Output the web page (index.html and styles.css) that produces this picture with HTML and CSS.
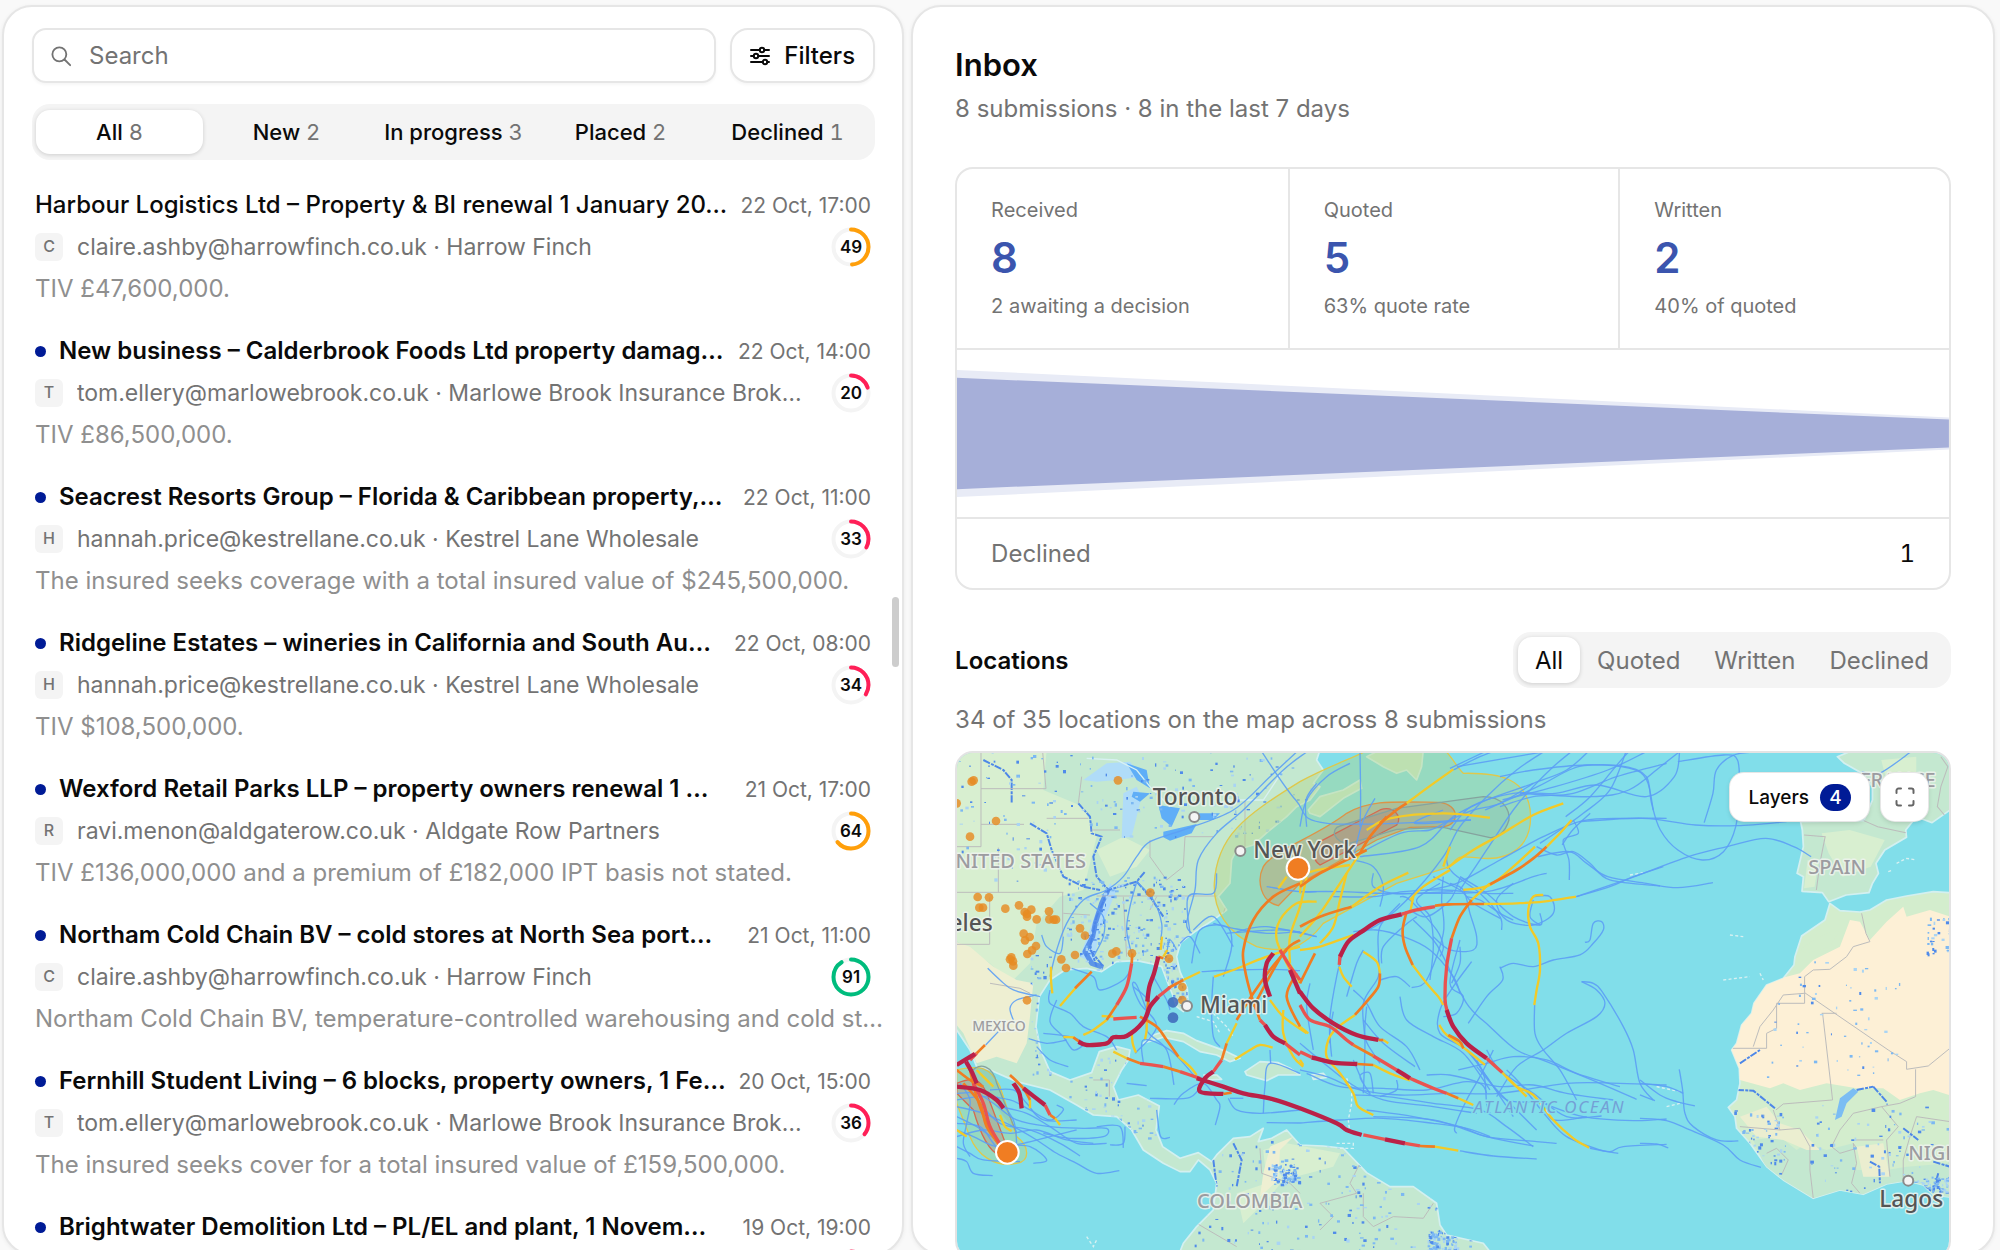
FILE: index.html
```html
<!DOCTYPE html>
<html lang="en">
<head>
<meta charset="utf-8">
<title>Inbox</title>
<link rel="stylesheet" href="styles.css">
</head>
<body>
<div class="app">
  <section class="panel list-panel" aria-label="Submissions">
    <div class="toolbar">
      <label class="search">
        <svg class="search-icon" viewBox="0 0 24 24" aria-hidden="true"><circle cx="10.2" cy="10.2" r="7.6"/><path d="M15.8 15.8 22 22"/></svg>
        <input type="text" placeholder="Search" aria-label="Search">
      </label>
      <button class="filters" type="button">
        <svg class="filter-icon" viewBox="0 0 20 20" aria-hidden="true"><path d="M1 4h8.500M14.500 4H19M1 10h2.500M8.500 10H19M1 16h11.500M17.500 16H19"/><circle cx="12" cy="4" r="2.200"/><circle cx="6" cy="10" r="2.200"/><circle cx="15" cy="16" r="2.200"/></svg>
        Filters
      </button>
    </div>
    <div class="tabs">
      <button class="tab active" type="button">All <span>8</span></button>
      <button class="tab" type="button">New <span>2</span></button>
      <button class="tab" type="button">In progress <span>3</span></button>
      <button class="tab" type="button">Placed <span>2</span></button>
      <button class="tab" type="button">Declined <span>1</span></button>
    </div>
    <div class="items">
      <article class="item read">
        <div class="row"><h3>Harbour Logistics Ltd – Property &amp; BI renewal 1 January 20…</h3><time>22 Oct, 17:00</time></div>
        <div class="row"><span class="avatar">C</span><span class="from">claire.ashby@harrowfinch.co.uk · Harrow Finch</span><span class="score amber"><svg viewBox="0 0 40 40"><circle cx="20" cy="20" r="17.500"/><circle class="arc" cx="20" cy="20" r="17.500" pathLength="100" stroke-dasharray="49 100"/></svg><b>49</b></span></div>
        <p>TIV £47,600,000.</p>
      </article>
      <article class="item">
        <div class="row"><i class="dot"></i><h3>New business – Calderbrook Foods Ltd property damag…</h3><time>22 Oct, 14:00</time></div>
        <div class="row"><span class="avatar">T</span><span class="from">tom.ellery@marlowebrook.co.uk · Marlowe Brook Insurance Brok…</span><span class="score red"><svg viewBox="0 0 40 40"><circle cx="20" cy="20" r="17.500"/><circle class="arc" cx="20" cy="20" r="17.500" pathLength="100" stroke-dasharray="20 100"/></svg><b>20</b></span></div>
        <p>TIV £86,500,000.</p>
      </article>
      <article class="item">
        <div class="row"><i class="dot"></i><h3>Seacrest Resorts Group – Florida &amp; Caribbean property,…</h3><time>22 Oct, 11:00</time></div>
        <div class="row"><span class="avatar">H</span><span class="from">hannah.price@kestrellane.co.uk · Kestrel Lane Wholesale</span><span class="score red"><svg viewBox="0 0 40 40"><circle cx="20" cy="20" r="17.500"/><circle class="arc" cx="20" cy="20" r="17.500" pathLength="100" stroke-dasharray="33 100"/></svg><b>33</b></span></div>
        <p>The insured seeks coverage with a total insured value of $245,500,000.</p>
      </article>
      <article class="item">
        <div class="row"><i class="dot"></i><h3>Ridgeline Estates – wineries in California and South Au…</h3><time>22 Oct, 08:00</time></div>
        <div class="row"><span class="avatar">H</span><span class="from">hannah.price@kestrellane.co.uk · Kestrel Lane Wholesale</span><span class="score red"><svg viewBox="0 0 40 40"><circle cx="20" cy="20" r="17.500"/><circle class="arc" cx="20" cy="20" r="17.500" pathLength="100" stroke-dasharray="34 100"/></svg><b>34</b></span></div>
        <p>TIV $108,500,000.</p>
      </article>
      <article class="item">
        <div class="row"><i class="dot"></i><h3>Wexford Retail Parks LLP – property owners renewal 1 …</h3><time>21 Oct, 17:00</time></div>
        <div class="row"><span class="avatar">R</span><span class="from">ravi.menon@aldgaterow.co.uk · Aldgate Row Partners</span><span class="score amber"><svg viewBox="0 0 40 40"><circle cx="20" cy="20" r="17.500"/><circle class="arc" cx="20" cy="20" r="17.500" pathLength="100" stroke-dasharray="64 100"/></svg><b>64</b></span></div>
        <p>TIV £136,000,000 and a premium of £182,000 IPT basis not stated.</p>
      </article>
      <article class="item">
        <div class="row"><i class="dot"></i><h3>Northam Cold Chain BV – cold stores at North Sea port…</h3><time>21 Oct, 11:00</time></div>
        <div class="row"><span class="avatar">C</span><span class="from">claire.ashby@harrowfinch.co.uk · Harrow Finch</span><span class="score green"><svg viewBox="0 0 40 40"><circle cx="20" cy="20" r="17.500"/><circle class="arc" cx="20" cy="20" r="17.500" pathLength="100" stroke-dasharray="91 100"/></svg><b>91</b></span></div>
        <p>Northam Cold Chain BV, temperature-controlled warehousing and cold st…</p>
      </article>
      <article class="item">
        <div class="row"><i class="dot"></i><h3>Fernhill Student Living – 6 blocks, property owners, 1 Fe…</h3><time>20 Oct, 15:00</time></div>
        <div class="row"><span class="avatar">T</span><span class="from">tom.ellery@marlowebrook.co.uk · Marlowe Brook Insurance Brok…</span><span class="score red"><svg viewBox="0 0 40 40"><circle cx="20" cy="20" r="17.500"/><circle class="arc" cx="20" cy="20" r="17.500" pathLength="100" stroke-dasharray="36 100"/></svg><b>36</b></span></div>
        <p>The insured seeks cover for a total insured value of £159,500,000.</p>
      </article>
      <article class="item">
        <div class="row"><i class="dot"></i><h3>Brightwater Demolition Ltd – PL/EL and plant, 1 Novem…</h3><time>19 Oct, 19:00</time></div>
        <div class="row"><span class="score red"><svg viewBox="0 0 40 40"><circle cx="20" cy="20" r="17.500"/><circle class="arc" cx="20" cy="20" r="17.500" pathLength="100" stroke-dasharray="30 100"/></svg></span></div>
      </article>
    </div>
    <span class="scroll-thumb"></span>
  </section>

  <main class="panel detail-panel">
    <h1>Inbox</h1>
    <p class="sub">8 submissions · 8 in the last 7 days</p>
    <section class="funnel" aria-label="Funnel">
      <div class="stats">
        <div class="stat"><span>Received</span><strong>8</strong><span>2 awaiting a decision</span></div>
        <div class="stat"><span>Quoted</span><strong>5</strong><span>63% quote rate</span></div>
        <div class="stat"><span>Written</span><strong>2</strong><span>40% of quoted</span></div>
      </div>
      <svg class="funnel-chart" viewBox="0 0 994 168" preserveAspectRatio="none" aria-hidden="true">
        <path fill="#e8ebf6" d="M0 20 994 68V100L0 148Z"/>
        <path fill="#a6afd9" d="M0 28 994 70V98L0 140Z"/>
      </svg>
      <div class="declined"><span>Declined</span><b>1</b></div>
    </section>
    <div class="loc-head">
      <h2>Locations</h2>
      <div class="segment">
        <button class="active" type="button">All</button><button type="button">Quoted</button><button type="button">Written</button><button type="button">Declined</button>
      </div>
    </div>
    <p class="loc-sub">34 of 35 locations on the map across 8 submissions</p>
    <div class="map">
      <svg class="map-canvas" viewBox="21 9 2976 1512" role="img" aria-label="Map of locations">
        <defs>
          <path id="americas" d="M0 0H1110L1100 30 1120 60 1090 100 1110 110 1080 150 1040 170 1010 200 960 240 910 285 860 300 845 330 840 400 805 440 830 480 790 510 735 545 692 578 680 620 690 665 712 715 714 760 700 785 680 770 668 735 650 690 635 650 600 640 560 632 500 635 455 665 410 655 345 660 300 690 268 740 258 830 272 900 300 965 360 990 425 968 448 905 500 890 540 900 535 930 515 960 490 1010 505 1050 565 1035 628 1068 618 1140 638 1190 690 1225 745 1208 785 1235 800 1215 850 1165 900 1160 940 1135 925 1175 965 1165 1010 1140 1050 1185 1120 1188 1180 1195 1250 1268 1320 1310 1390 1310 1460 1360 1470 1425 1490 1455 1600 1480 1640 1530H680L700 1480 740 1430 790 1380 800 1300 780 1260 745 1230 720 1265 690 1265 640 1240 580 1200 545 1140 500 1100 430 1095 380 1065 300 1020 200 995 120 960 80 950 60 900 20 840H0Z"/>
          <path id="africa" d="M930 128 880 125 800 138 740 150 690 180 660 186 600 182 570 160 555 210 485 258 465 320 462 345 430 385 380 405 342 460 335 490 305 525 290 580 275 600 298 655 300 700 290 750 265 772 285 800 290 835 330 880 380 950 430 990 520 1045 600 1020 670 1033 740 1002 800 992 850 1005 880 1035 960 1045V120Z"/>
          <clipPath id="clip-americas"><use href="#americas"/></clipPath>
          <clipPath id="clip-africa"><use href="#africa"/></clipPath>
        </defs>
        <rect x="0" y="0" width="3100" height="1600" fill="#81deea"/>
        <use href="#americas" class="land"/>
        <g clip-path="url(#clip-americas)">
          <path fill="#d8efd0" d="M0 0H290L280 120 400 170 440 260 400 420 330 440 260 520 240 640 180 700 120 640 0 560ZM440 300 520 260 600 300 560 350 480 380ZM860 1330 950 1300 940 1200 1010 1180 1170 1210 1150 1250 1000 1290 960 1340 880 1420Z"/>
          <path fill="#eeefd2" d="M0 570 60 590 130 650 200 690 250 700 240 800 230 880 200 940 140 920 80 940 40 850 0 800ZM930 1340 985 1290 990 1200 1030 1160 960 1190 940 1270Z"/>
          <path fill="#b0dcf8" d="M400 90 470 40 540 35 575 80 500 90 440 95ZM520 130 560 110 575 140 545 260 515 265ZM440 480 480 400 500 420 450 540 430 640 390 620Z"/>
          <path fill="#5faef7" d="M530 40 590 60 600 115 560 90ZM550 125 600 130 570 155 545 140ZM625 165 690 175 665 230 635 205ZM640 245 740 222 725 250 660 272 640 262ZM745 190 810 190 790 210 745 210Z"/>
          <path class="river" d="M385 160 420 200 425 250 455 260 430 320 440 380 475 420 560 395 585 365M475 420 440 500 420 590 440 650M100 30 160 60 185 90 185 160M240 220 290 250 305 300 340 380 400 410 450 420M420 600 460 650M560 395 600 440 640 500M790 1230 800 1310M850 1180 875 1230 860 1310"/>
          <path class="delta" d="M476 415 455 460 436 520 428 560 405 605 425 640 460 652"/>
          <path class="border" d="M93 6V290H20M93 116H288L278 6M93 223H222M290 205H415M425 240H510M145 293V427M20 427H340M119 442V583H20M338 427V560M340 490 420 495M395 80 385 160M600 270V320L650 390 700 350 705 260H790M440 438H800M520 440 530 620M620 440 600 480M120 700 210 715 240 730M845 420 820 490M885 150V290M430 990H478V1040M1050 700 1000 700M930 1195 935 1270 1020 1300 1050 1330M1230 1240 1200 1300 1220 1330 1110 1360 1150 1400 1110 1440M1240 1330 1240 1400 1270 1430 1330 1400 1420 1405 1450 1360M740 1420 860 1490"/>
          <path class="coastline" d="M410 25 500 30 560 60 600 110 660 170M830 150H940L1000 60"/>
          <g id="flecks-west"></g>
        </g>
        <g class="land">
          <path d="M580 880 610 855 650 842 700 850 740 872 790 890 830 905 870 925 840 935 800 915 750 905 700 875 640 862ZM885 965 930 935 985 938 1020 955 1050 975 985 975 950 992 890 975ZM762 975 800 975 815 988 770 990ZM1085 975 1120 970 1130 982 1090 988Z"/>
          <path d="M1250 20 1290 0H1420L1415 50 1400 90 1370 60 1340 70 1300 50ZM1075 180 1110 140 1180 120 1230 90 1235 115 1180 145 1110 200 1080 190Z"/>
        </g>
        <path class="islets" d="M1190 985 1205 1020 1205 1060 1195 1110 1200 1150M1160 1180H1210V1195H1170M740 800 790 815 810 850M790 790 830 830 850 860M410 1460 430 1490 440 1470M2340 555 2380 560M2040 375 2080 368M2320 690 2400 680M2430 670 2440 690M2120 1010 2190 1025M2150 1070 2190 1060M2840 340 2870 325 2900 330M2815 365 2830 360"/>

        <g transform="translate(2070 300)">
          <use href="#africa" class="land light"/>
          <g clip-path="url(#clip-africa)">
            <path fill="#fdf0d6" d="M480 370 520 330 600 290 630 210 660 215 690 270 740 215 790 170 800 200 870 180 960 210V745L880 720 840 730 780 750 730 715 650 715 560 700 480 720 430 700 390 715 300 690 250 600 300 500 350 400 440 380Z"/>
            <path fill="#d3edcd" d="M480 300 520 270 560 250 600 240 570 290 500 310Z"/>
            <path fill="#c4e8d0" d="M340 870 420 860 470 900 500 880 560 900 640 880 650 960 740 960 800 950 930 940V1060H500L380 960Z"/>
            <path fill="#ebeed0" d="M300 800 380 770 420 820 480 840 540 900 500 900 430 870 350 860ZM650 890 730 880 750 980 670 980Z"/>
            <path class="border" d="M665 190 678 250 690 275 640 290 620 320 570 358 520 360 494 380V428L745 600 800 635V658L865 648 930 595M494 428V460H410V535L380 550V595H278M548 490 578 750 430 762 408 780M545 490H590M827 658V740L780 760 725 770 640 790 600 840 575 890 600 910 650 895 640 880 650 940 635 1000 660 1030M725 770 775 830 740 870 750 980M400 780 420 840 480 835 510 890 510 960 520 1045M420 840 300 830M380 910 410 895 445 930 425 975M790 990V930L810 860 830 800 930 815M730 870H645M494 430 430 435 400 480 360 530 340 590"/>
            <path class="river" d="M290 720 340 722 405 775M690 935 718 950 720 1000M700 710 740 755M790 835 835 870M880 935 930 950M895 970 880 1025 850 1010M300 640 360 600M650 720 700 710"/>
            <path fill="#7bbdf3" d="M600 745 640 715 655 725 620 760 605 800 585 810Z"/>
            <g id="flecks-east"></g>
          </g>
        </g>
        <g transform="translate(1500 -450) scale(1.052 1)">
          <path class="land" d="M1000 665 1180 662 1205 600 1205 560 1175 520 1125 490 1105 470 1140 455H1440V620L1375 668 1330 650 1300 690 1302 712 1240 750 1215 790 1222 820 1205 850 1195 878 1130 885 1080 905 1062 878 1004 874 1008 830 990 820 1008 740 1005 690Z"/>
          <path fill="#d8efd0" d="M1060 700 1140 690 1240 720 1200 800 1120 830 1080 760ZM1230 480 1330 470 1330 560 1260 600ZM1020 780 1050 790 1040 860 1010 865Z"/>
          <path class="border" d="M1180 662 1220 680 1300 698M1010 705 1070 710 1055 790 1045 870M1400 470 1420 500 1400 560 1390 620 1410 645"/>
        </g>

        <g class="cones">
          <path class="cone yellow" d="M1050 95C1150 40 1230 20 1290 -20H1450C1500 0 1510 40 1540 70 1640 68 1740 80 1742 200 1742 290 1680 330 1600 325 1530 320 1530 310 1500 350L1340 400 1120 520C1060 600 1000 610 920 590 830 550 790 480 793 400 800 260 880 200 1050 95Z"/>
          <path class="cone orange" d="M985 467C930 455 920 390 940 350 970 300 1100 260 1190 190 1260 150 1320 155 1470 157 1530 165 1530 225 1480 230L1380 232 1280 270 1050 400Z"/>
          <path class="cone red" d="M1110 345C1085 330 1090 290 1110 275L1290 180C1330 165 1360 200 1340 225Z"/>
          <path class="cone grey" d="M1170 228 1340 175 1600 140C1660 140 1680 180 1677 210 1665 250 1640 265 1620 263L1480 232 1340 238 1200 280C1150 280 1140 235 1170 228Z"/>
          <path class="cone yellow" d="M20 960C90 945 120 950 150 1010L200 1160C240 1190 240 1235 200 1240 130 1255 80 1210 60 1160L20 1060Z"/>
          <path class="cone red" d="M20 1000C70 980 90 985 110 1030L170 1190 150 1215C120 1210 90 1150 70 1080L20 1030Z"/>
          <path class="cone grey" d="M60 970C90 930 130 950 140 1000L200 1150"/>
        </g>
        <g id="tracks"></g>
        <g id="sites"></g>
        <g class="cities">
          <circle cx="733" cy="201" r="15"/><circle cx="871" cy="303" r="15"/><circle cx="711" cy="768" r="15"/><circle cx="2875" cy="1292" r="15"/>
        </g>
        <g class="labels">
          <text class="country" x="408" y="354" text-anchor="end">UNITED STATES</text>
          <text class="country small" x="147" y="842" text-anchor="middle">MEXICO</text>
          <text class="country" x="741" y="1373">COLOMBIA</text>
          <text class="country" x="2575" y="372">SPAIN</text>
          <text class="country" x="2730" y="112">FRANCE</text>
          <text class="country" x="2875" y="1230">NIGERIA</text>
          <text class="ocean" x="1571" y="1089">ATLANTIC OCEAN</text>
          <text class="city" x="608" y="166">Toronto</text>
          <text class="city" x="910" y="325">New York</text>
          <text class="city" x="128" y="542" text-anchor="end">Los Angeles</text>
          <text class="city" x="750" y="790">Miami</text>
          <text class="city" x="2788" y="1371">Lagos</text>
        </g>
        <g class="storms"><circle cx="1044" cy="355" r="34"/><circle cx="172" cy="1207" r="34"/></g>
      </svg>
      <div class="map-controls">
        <button class="layers" type="button">Layers <span>4</span></button>
        <button class="expand" type="button" aria-label="Full screen"><svg viewBox="0 0 20 20" aria-hidden="true"><path d="M1.500 6V3.500a2 2 0 0 1 2-2H6M14 1.500h2.500a2 2 0 0 1 2 2V6M18.500 14v2.500a2 2 0 0 1-2 2H14M6 18.500H3.500a2 2 0 0 1-2-2V14"/></svg></button>
      </div>
    </div>
  </main>
</div>
<script src="map.js"></script>
</body>
</html>
```
FILE: styles.css
```css
* { box-sizing: border-box; }
body {
  margin: 0;
  height: 100vh;
  overflow: hidden;
  background: #f9f9f9;
  color: #0a0a0a;
  font-family: Inter, "Liberation Sans", sans-serif;
  font-size: 24px;
}
h1, h2, h3, p { margin: 0; }
button, input { font: inherit; color: inherit; }
button { border: 0; background: none; padding: 0; white-space: nowrap; }

.app {
  display: grid;
  grid-template-columns: 903fr 1085fr;
  gap: 7px;
  padding: 5px 5px 0 2px;
}
.panel {
  height: 100vh;
  min-width: 0;
  background: #fff;
  border: 2px solid #e6e6e6;
  border-radius: 30px;
  box-shadow: 0 1px 4px rgba(0, 0, 0, .06);
  overflow: hidden;
}

/* submissions list */
.list-panel { position: relative; padding: 21px 27px 0 28px; }
.toolbar { display: flex; gap: 14px; }
.search, .filters {
  height: 55px;
  display: flex;
  align-items: center;
  border: 2px solid #e6e6e6;
  background: #fff;
  box-shadow: 0 2px 3px rgba(0, 0, 0, .04);
}
.search { flex: 1; border-radius: 14px; padding: 0 16px; gap: 17px; }
.search input { flex: 1; min-width: 0; border: 0; outline: 0; padding: 0; background: none; }
.search input::placeholder { color: #737373; opacity: 1; }
.search-icon { width: 22px; height: 22px; fill: none; stroke: #737373; stroke-width: 2; stroke-linecap: round; }
.filters { border-radius: 18px; padding: 0 18px; gap: 14px; font-weight: 500; }
.filter-icon { width: 20px; height: 20px; fill: none; stroke: #0a0a0a; stroke-width: 2; stroke-linecap: round; }
.tabs {
  display: grid;
  grid-template-columns: repeat(5, 1fr);
  margin-top: 21px;
  height: 56px;
  padding: 6px 4px;
  border-radius: 18px;
  background: #f4f4f4;
  font-size: 22px;
  font-weight: 500;
}
.tab { border-radius: 14px; }
.tab span { color: #737373; font-weight: 400; font-variant-numeric: tabular-nums; }
.tab.active, .segment .active { background: #fff; box-shadow: 0 1px 4px rgba(0, 0, 0, .16); }

.items { padding: 14px 4px 0 3px; }
.item { height: 146px; padding: 10px 0; }
.row { height: 42px; display: flex; align-items: center; }
.dot { width: 11px; height: 11px; margin-right: 13px; border-radius: 50%; background: #001b96; flex: none; }
.item h3 { flex: 1; min-width: 0; white-space: nowrap; overflow: hidden; font-size: 24px; line-height: 42px; font-weight: 600; }
.item.read h3 { font-weight: 500; }
.item time { margin-left: 8px; font-size: 21px; color: #737373; white-space: nowrap; }
.avatar {
  width: 28px;
  height: 28px;
  margin-right: 14px;
  border-radius: 6px;
  background: #f4f4f4;
  color: #737373;
  font-size: 16px;
  font-weight: 500;
  line-height: 26px;
  text-align: center;
}
.from { flex: 1; min-width: 0; white-space: nowrap; overflow: hidden; color: #737373; font-size: 23px; line-height: 42px; }
.score { position: relative; width: 40px; height: 40px; margin-left: auto; flex: none; display: grid; place-items: center; font-size: 17px; }
.score svg { position: absolute; inset: 0; fill: none; stroke: #f4f4f4; stroke-width: 4; transform: rotate(-90deg); }
.score b { position: relative; font-weight: 600; }
.score .arc { stroke-linecap: round; }
.amber .arc { stroke: #ff9f0a; }
.red .arc { stroke: #ff1f57; }
.green .arc { stroke: #00bc7d; }
.item p { line-height: 42px; color: #8f8f8f; white-space: nowrap; }
.scroll-thumb { position: absolute; right: 3px; top: 590px; width: 7px; height: 70px; border-radius: 4px; background: #cdcdcd; }

/* inbox overview */
.detail-panel { padding: 38px 42px 0; }
h1 { font-size: 31px; line-height: 40px; font-weight: 600; }
.sub, .loc-sub { color: #737373; line-height: 34px; }
.sub { margin-top: 7px; }
.funnel { margin-top: 41px; border: 2px solid #e6e6e6; border-radius: 18px; overflow: hidden; }
.stats { display: grid; grid-template-columns: repeat(3, 1fr); border-bottom: 2px solid #e6e6e6; }
.stat { display: flex; flex-direction: column; padding: 26px 34px 27px; border-left: 2px solid #e6e6e6; font-size: 20px; line-height: 30px; color: #737373; }
.stat:first-child { border-left: 0; }
.stat strong { font-size: 42px; line-height: 66px; font-weight: 600; color: #3b55ae; }
.funnel-chart { display: block; width: 100%; height: 167px; }
.declined { display: flex; justify-content: space-between; padding: 0 34px; line-height: 69px; border-top: 2px solid #e6e6e6; color: #737373; font-variant-numeric: tabular-nums; }
.declined b { font-weight: 400; color: #0a0a0a; }
.loc-head { display: flex; justify-content: space-between; align-items: center; margin-top: 42px; }
h2 { font-size: 24px; font-weight: 600; }
.segment { display: flex; height: 56px; padding: 5px; border-radius: 18px; background: #f4f4f4; color: #737373; }
.segment button { padding: 0 17px; border-radius: 14px; }
.segment .active { color: #0a0a0a; }
.loc-sub { margin: 15px 0 14px; }

/* map */
.map { position: relative; border: 2px solid #e3e3e3; border-radius: 18px; overflow: hidden; }
.map-canvas { display: block; width: 100%; height: auto; }
.map-controls { position: absolute; top: 20px; right: 21px; display: flex; gap: 12px; }
.layers, .expand { height: 48px; background: #fff; border-radius: 14px; box-shadow: 0 0 0 1px #e6e6e6, 0 2px 5px rgba(0, 0, 0, .15); }
.layers { display: flex; align-items: center; gap: 11px; padding: 0 18px; font-size: 19px; font-weight: 500; }
.layers span { width: 31px; line-height: 27px; border-radius: 14px; background: #001b96; color: #fff; }
.expand { width: 47px; display: grid; place-items: center; }
.expand svg { width: 20px; height: 20px; fill: none; stroke: #666; stroke-width: 2; stroke-linecap: round; }
.land { fill: #c4e8d0; stroke: #d3f0f0; stroke-width: 5; stroke-linejoin: round; }
.land.light { fill: #d3edcd; }
.river { fill: none; stroke: #4d87e8; stroke-width: 6; stroke-linejoin: round; stroke-dasharray: 22 4 9 3; }
.delta { fill: none; stroke: #4b86e9; stroke-width: 15; stroke-linejoin: round; opacity: .85; }
.border { fill: none; stroke: #bcbcbc; stroke-width: 3; }
.coastline, .islets { fill: none; stroke: #d8f1f2; stroke-width: 4; }
.islets { stroke-dasharray: 9 7; }
.cone { stroke-width: 4; }
.cone.yellow { fill: #b2d585; fill-opacity: .42; stroke: #dfc84b; }
.cone.orange { fill: #d38f51; fill-opacity: .34; stroke: #dc9447; }
.cone.red { fill: #c9695c; fill-opacity: .28; stroke: #d36b51; }
.cone.grey { fill: #77808a; fill-opacity: .1; stroke: #85a39e; }
.track { fill: none; stroke-linejoin: round; }
.track.b { stroke: #5c9ff5; stroke-width: 4; opacity: .9; }
.track.y { stroke: #f2ca27; stroke-width: 7; }
.track.o { stroke: #f07d22; stroke-width: 8; }
.track.r { stroke: #e95350; stroke-width: 10; }
.track.d { stroke: #ba2148; stroke-width: 13; }
.site { fill: #e78b22; opacity: .82; }
.site.blue { fill: #3b62b8; }
.cities circle { fill: #f4f4f4; stroke: #8a8a8a; stroke-width: 6; }
.storms circle { fill: #f07d22; stroke: #fff; stroke-width: 6; }
.labels text { font-family: "Noto Sans", sans-serif; font-weight: 500; paint-order: stroke; stroke: rgba(238, 243, 238, .85); stroke-width: 9; stroke-linejoin: round; }
.labels .city { font-size: 68px; fill: #555; }
.labels .country { font-size: 60px; fill: #9c9ca0; }
.labels .country.small { font-size: 42px; }
.labels .ocean { font-size: 51px; font-style: italic; font-weight: 400; letter-spacing: .1em; fill: #74a0d6; stroke: #81deea; }
```
FILE: map.js
```js
// Storm tracks: "<strength> x,y x,y ..." in map units, grouped by horizontal origin.
const west = `
b 1070,6 1000,60 880,180 800,250 745,330 735,420 710,520 725,550
b 1040,6 960,80 850,180 700,240 600,275 560,320 520,380 470,420 400,450 350,520 320,600 300,680
b 420,460 460,500 460,560 430,620
b 560,395 610,450 635,520 632,570
b 560,395 540,470 530,540 547,620
b 800,370 790,430 715,440 720,550
b 270,740 190,720 150,690 113,655
b 260,735 200,750 180,775 190,810
b 145,845 107,885
b 275,555 290,590 330,610 340,560
b 300,720 300,760 360,790 400,830 470,860 500,900
b 320,750 300,815 340,860 370,900 400,880 360,860 280,850
b 236,866 290,880 350,870
b 260,890 300,930 355,950
b 365,655 430,680 450,720 520,690 545,650
b 550,710 600,760 590,840 650,900 672,1005
b 556,910 620,830 570,760 548,705 560,705 590,780
b 580,940 580,870 660,900 735,980
b 530,1000 590,1007
b 600,1045 720,1042 760,990
b 672,1064 700,1030 760,1000 800,1050 810,1070 796,1125
b 835,1045 860,1080 930,1090 1050,1080
b 840,1045 880,1045
b 950,1118 1050,1119
b 940,1090 945,1010 960,940 1050,970
b 960,900 962,940
b 725,640 750,540 830,530 845,590 820,680
b 730,540 790,500 850,590
b 690,580 720,560 750,610
b 680,600 660,570 650,610
b 755,665 850,660 960,658 1050,662
b 790,680 785,770 790,860 810,890
b 790,520 850,535 950,550 1050,545
b 830,550 1000,540 1100,560
b 950,410 1050,425 1100,425
b 860,545 950,530 1100,560
b 610,680 650,750 660,780
b 660,1162 632,1160 620,1080
b 520,1194 510,1130 440,1130
b 20,1030 80,1030 130,1060 200,1110 300,1130 400,1135 470,1135 460,1160 360,1165 280,1150
b 20,1070 100,1090 190,1130 260,1170 320,1210 380,1240 440,1270 508,1262
b 20,1100 80,1130 160,1180 240,1190 290,1230 250,1240
b 20,1140 70,1160 140,1190 220,1180 300,1160 380,1140
b 20,1190 60,1210 100,1230 210,1235
b 20,1225 50,1235 70,1270 128,1277
b 30,1000 60,1050 50,1120 40,1180 60,1220
b 20,1050 90,1040 180,1050 240,1080 300,1110 340,1080 320,1065
b 120,1020 190,1020 230,1060 280,1110 380,1110
b 150,1070 230,1090 300,1130 380,1180 470,1180
b 90,1060 150,1120 240,1140 330,1180 390,1218
b 20,1160 100,1140 180,1150 260,1140 350,1170 430,1180
b 20,1120 90,1130 130,1180 180,1240
b 480,1185 520,1180 525,1130
b 200,1180 190,1110 140,1040
y 307,730 303,690 303,650
y 330,768 380,710
o 375,715 425,665
y 632,600 636,560
o 547,610 545,640
r 545,640 530,710 500,765
o 500,765 470,810
y 470,810 430,840 400,855
d 625,620 612,670 598,710 592,755
o 595,750 590,800
y 590,800 590,840 585,868
d 385,875 410,885 470,880 490,862 530,858 580,815 600,770 625,740
y 340,861 372,862
o 370,862 395,880
r 625,740 660,712
o 655,714 700,690
y 700,690 750,666
y 640,620 652,600
o 640,625 625,620
y 455,798 490,800
r 490,807 560,802
o 570,800 620,830 650,870 685,920
y 685,920 720,950 740,975
y 545,840 548,880 558,908
y 490,905 530,925
o 530,925 570,940
r 570,940 640,950
o 640,950 690,965
r 690,965 750,985
d 740,985 820,1010 880,1030 970,1048 1050,1075 1160,1120 1190,1140 1235,1155
d 790,965 765,985 750,1025 820,1032
o 820,1032 845,1028
r 790,965 815,930
o 815,930 830,880
y 830,880 860,820
o 860,810 910,730 960,660 1010,600
y 855,928 900,900 930,885 968,893
y 792,680 850,660 950,620 1050,590
r 80,910 60,930
o 105,885 80,910
d 20,945 75,912
d 48,935 65,965 80,1000
o 20,960 60,990 100,1010
d 20,1010 90,1020 140,1050 160,1075
o 60,960 80,1040 110,1120 150,1190
o 40,1000 90,1060 110,1130 160,1200
r 70,1000 100,1060 120,1130 155,1190
y 80,960 130,1010
y 150,1095 165,1130 185,1143
d 190,1000 208,1030 215,1075
o 180,975 220,1015 240,1050
y 240,1050 240,1075
d 220,1015 285,1065
r 285,1065 300,1095
o 300,1095 315,1105
y 315,1105 330,1125
y 20,1140 50,1160
y 985,415 1010,380`;

const mid = `
b 180,0 182,150 180,230
b 225,145 190,210 170,280 160,330
b 0,230 20,150 80,80 150,40
b 20,230 18,150 50,100
b 460,60 540,20 620,-10
b 870,0 800,60 700,100 560,150 460,200 360,290 180,320
b 740,0 650,60 560,140 480,230 430,320 340,430 240,520 160,560
b 820,0 760,50 700,110 640,180 560,300 480,420
b 980,0 930,120 850,190 780,240 720,280
b 1100,40 950,80 820,130 700,140 600,170
b 700,100 600,160 520,180 450,210 390,240 300,250 160,320
b 1100,205 980,205 850,212 730,260 600,330 470,400 380,420
b 600,80 700,60 860,45 990,55 1040,90 1060,180
b 820,210 835,250 790,270 807,330 808,390
b 710,290 770,315 820,305 870,340 930,390 1080,408
b 830,440 930,410 1000,380 1090,350
b 160,330 220,350 250,410 240,470
b 220,370 220,410 280,430 360,430 560,425 700,380 740,370
b 0,425 120,425 240,430 340,430 460,425
b 100,440 220,440 310,425 430,420 560,430 640,430
b 450,290 440,330 460,370 540,430 600,500 605,540
b 480,380 560,430 640,500 720,525 720,490
b 400,380 480,420 520,460 600,505
b 430,380 425,450 430,550 380,690 335,713
b 480,385 450,450 380,500 330,480
b 420,400 350,450 390,500 400,590 390,690
b 300,440 330,450 410,540 430,590 420,620
b 500,440 540,450 600,490 640,510
b 400,560 450,600 520,600 530,560 510,490 490,420 450,400
b 300,460 240,530 235,610 235,680 190,760 195,880 190,1030
b 640,400 590,450 620,510 700,525 760,490 750,440 700,440
b 480,570 450,700 490,740 470,790 430,800
b 480,590 480,640 455,700
b 245,640 250,590 310,530 350,500
b 160,545 230,540 310,560 390,600 460,680 480,730
b 340,510 400,570 430,620 500,760 570,830 650,900 740,935 900,1000 1010,1048
b 515,635 460,710 420,780 420,850 500,900 560,980 640,1100
b 240,690 290,680 330,710
b 130,600 110,680 90,800 90,880
b 140,740 170,640 190,600
b 160,720 200,760 240,830 320,890 360,960
b 190,810 250,880 345,950
b 300,740 320,810 400,860 490,910 570,1020
b 200,770 195,860 220,910 240,940
b 600,650 608,690 560,740 505,820
b 600,655 640,640 700,650 760,630 840,615 880,580 910,540 905,515 880,520 870,570 855,577
b 845,695 890,720 915,760 890,800 800,850 730,900 650,950 590,1040
b 845,695 880,700 910,730 970,830 1000,900 1020,1000 1060,1050
b 704,765 705,850 730,900 780,960 830,1050
b 30,700 20,770 40,900
b 100,785 90,850 95,920
b 380,975 450,975 540,1000 560,1030
b 160,930 190,1000 210,1030 180,980 210,970 220,1030
b 0,880 60,930 150,1000 250,1050 400,1070 530,1090
b 0,960 80,980 180,1020 300,1035 450,1030 600,1030 800,1000 960,1000 1100,1005
b 20,970 120,1010 250,1015 380,1020 500,995 600,1010 700,1005 800,1030 940,1050
b 160,1035 260,1040 400,1060 540,1080 620,1130 700,1190
b 200,1080 340,1100 480,1130 560,1160 710,1175 770,1180
b 220,1100 400,1110 560,1160 700,1188
b 0,1119 120,1110 250,1105 400,1120 500,1135 570,1160
b 480,1203 580,1218 710,1227
b 580,900 540,980 500,1050 465,1130 470,1150
b 475,960 560,940 640,920 740,930 830,970 960,1010
b 500,900 550,970 560,1060 570,1090
b 530,950 600,1030 710,1140
b 530,930 560,980 620,1050 720,1060 760,1110 860,1100
b 620,960 660,1000 740,1100 800,1160 900,1200 955,1210
b 870,1195 930,1205 970,1190 1100,1183
b 730,1060 850,1100 1000,1112 1100,1107
b 560,900 600,960 700,1030 800,1100 905,1098
b 290,990 290,1020 240,1040
b 700,450 690,500 720,525
y 0,600 60,590 160,555
y 0,560 60,490 120,400 180,310
o 180,310 210,260 260,200
y 200,240 270,205 430,190 570,203
y 320,160 380,115 460,58
o 240,220 290,180 320,160
y 60,580 100,530 120,450 140,370
y 0,430 20,370 150,345
o 0,530 60,500 155,470
y 155,470 240,410 325,368
y 440,355 520,300 600,255 700,195 790,160
y 430,350 440,320 450,290
y 490,420 570,405 640,350 705,290
o 570,403 650,360 700,325 740,290
y 740,290 780,250 815,210
y 515,450 570,400
o 515,450 480,500 455,565
r 455,565 440,650 435,745 442,785
d 440,780 460,830 500,880 560,925
r 560,925 607,968
y 607,968 650,1010 700,1035 760,1110 820,1165 867,1193
o 445,855 480,875 490,895
y 418,825 440,855 500,900 555,945
y 620,980 680,1040
y 330,450 370,410 450,360
o 320,485 308,540 315,590 338,645
y 338,645 380,700 415,740 430,765
y 330,490 340,440
d 120,620 145,575 185,545 240,510 305,493
r 305,493 350,480 405,470
o 405,467 450,463 552,462
y 552,462 650,460 730,455 828,440
r 120,615 118,645
y 118,650 130,680 155,710
y 730,435 700,440 685,480 690,530 715,580 720,660 710,720 703,765
y 190,605 230,635 240,670
o 240,670 235,710 200,755 165,795
y 165,795 110,835 85,870 80,920 120,970 160,1030 175,1070 220,1095
d 0,725 40,775 100,820 170,855 235,870
o 235,870 250,870
y 250,870 265,880
r 0,765 30,810 90,830 140,870 160,885
o 160,885 220,918
r 220,918 290,960
d 290,960 330,985
r 330,985 400,1015 440,1030
o 440,1030 475,1045
y 475,1045 520,1065
d 35,922 100,938 172,942
r 0,905 35,922
o 172,942 220,945
y 220,945 270,970 330,992
r 190,1155 255,1168
d 255,1168 315,1180
r 315,1180 360,1188
o 360,1188 405,1190
y 405,1190 475,1202
y 0,830 25,850
y 0,930 10,945
o 0,700 20,660 45,610
r -30,650 0,690
d -80,610 -100,640 -105,690 -90,740
d -30,660 0,730
o 0,400 -80,440 -140,510 -170,600 -165,660 -145,740 -120,810
o -140,770 -50,610 0,570
r -120,810 -100,830
d -105,825 -80,860 -45,880
r -45,880 0,915
y -60,600 -20,660 0,700
r -60,600 -30,650
o -10,670 -40,740 0,830
y 20,380 0,470 -30,560 -30,640
y 50,455 -10,460 -60,510 -70,570 -30,660
y -90,750 -50,800 20,850
y -50,780 -50,850 -20,920 10,950
o 0,410 60,370 200,300`;

const east = `
b -540,450 -440,600 -350,670 60,660
b 0,505 100,455
b 20,500 270,455
b 60,660 -100,670 -20,630
b 370,665 550,655 700,675 820,677 960,665
b 0,690 60,620 180,580 300,580 420,555 560,590 640,530 655,455
b 100,630 250,560 340,510 400,495 500,500 560,530 575,610 600,690 650,750 720,780 780,755 815,680 825,570 820,480 780,465 650,485
b 725,668 750,580 760,510 810,465 885,455
b 200,580 400,590 510,570 600,500 655,455
b 330,650 400,590 480,490 510,455
b 150,600 300,560 450,510 560,455
b 320,735 350,690 400,640
b 360,890 500,840 680,770 790,740 900,715 980,740 1030,770
b 250,770 340,755 390,790 450,830 560,850 650,863 750,848
b 1315,455 1225,520 1175,515`;

const far = `
b 0,700 80,710 130,730
b 0,690 60,735 110,755 165,768
b 118,658 128,720 135,790 160,830 230,870 295,873
b 0,805 80,812 150,840 250,885 300,930 363,952
b 0,735 45,752
b 0,880 50,882 85,894`;

const NS = 'http://www.w3.org/2000/svg';

function smooth(pts) {
  let d = `M${pts[0]}`;
  for (let i = 0; i < pts.length - 1; i++) {
    const a = pts[i - 1] || pts[i], b = pts[i], c = pts[i + 1], e = pts[i + 2] || c;
    d += `C${b[0] + (c[0] - a[0]) / 6},${b[1] + (c[1] - a[1]) / 6} ${c[0] - (e[0] - b[0]) / 6},${c[1] - (e[1] - b[1]) / 6} ${c}`;
  }
  return d;
}

function add(parent, tag, attrs) {
  const el = document.createElementNS(NS, tag);
  for (const key in attrs) el.setAttribute(key, attrs[key]);
  parent.append(el);
}

const tracks = [];
function load(text, fx, fy) {
  for (const line of text.trim().split('\n')) {
    const [kind, ...rest] = line.split(' ');
    tracks.push([kind, rest.map(p => { const [x, y] = p.split(',').map(Number); return [fx(x), fy(y)]; })]);
  }
}
load(west, x => x, y => y);
load(mid, x => x + 1050, y => y);
load(east, x => 1500 + x * 1.052, y => y - 450);
load(far, x => x + 2070, y => y + 300);

const layer = document.getElementById('tracks');
for (const strength of 'byord')
  for (const [kind, pts] of tracks)
    if (kind === strength) add(layer, 'path', { class: `track ${kind}`, d: smooth(pts) });

const sites = '65,95 71,91 138,213 60,260 20,160 504,91 83,441 117,442 88,473 99,473 166,476 207,466 224,486 244,479 231,500 231,492 260,508 297,484 298,508 311,509 318,509 221,551 239,561 225,571 258,588 246,601 232,612 184,622 180,628 189,634 190,647 390,535 405,557 334,628 348,654 375,615 487,611 499,604 546,610 601,428 657,626 697,711 697,750 231,751';
for (const s of sites.split(' ')) {
  const [cx, cy] = s.split(',');
  add(document.getElementById('sites'), 'circle', { class: 'site', cx, cy, r: 13 });
}
for (const [cx, cy] of [[669, 757], [669, 803]])
  add(document.getElementById('sites'), 'circle', { class: 'site blue', cx, cy, r: 16 });

// Small lakes and streams, scattered with a fixed seed.
let seed = 7;
const rnd = () => (seed = (seed * 16807) % 2147483647) / 2147483647;
function flecks(id, count, x, y, w, h) {
  const parent = document.getElementById(id);
  for (let i = 0; i < count; i++)
    add(parent, 'rect', {
      x: Math.round(x + rnd() * w), y: Math.round(y + rnd() * h),
      width: 3 + Math.round(rnd() * 8), height: 3 + Math.round(rnd() * 7),
      fill: ['#4f8bea', '#7cb8f2', '#a9d4f4'][Math.floor(rnd() * 3)]
    });
}
flecks('flecks-west', 150, 290, 0, 800, 260);
flecks('flecks-west', 50, 20, 0, 270, 400);
flecks('flecks-west', 260, 350, 380, 360, 280);
flecks('flecks-west', 90, 640, 560, 80, 220);
flecks('flecks-west', 50, 240, 600, 60, 380);
flecks('flecks-west', 120, 350, 900, 300, 300);
flecks('flecks-west', 220, 720, 1170, 850, 340);
flecks('flecks-west', 90, 960, 1240, 90, 60);
flecks('flecks-west', 120, 1430, 1440, 90, 70);
flecks('flecks-east', 60, 380, 330, 400, 350);
flecks('flecks-east', 60, 280, 780, 160, 200);
flecks('flecks-east', 90, 500, 760, 440, 280);
flecks('flecks-east', 30, 860, 200, 70, 110);
flecks('flecks-east', 60, 850, 980, 80, 50);
```
